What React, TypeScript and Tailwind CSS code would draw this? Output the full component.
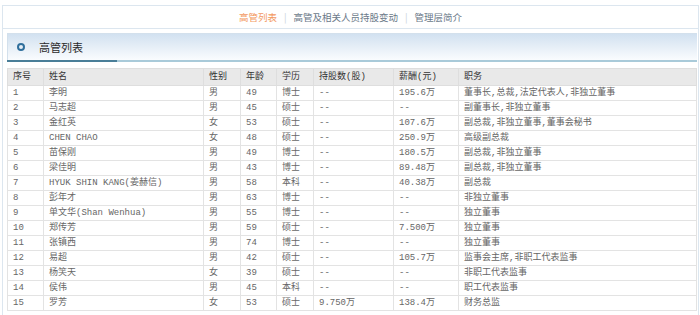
import React from 'react'

const rows = [
  ['1', '李明', '男', '49', '博士', '--', '195.6万', '董事长,总裁,法定代表人,非独立董事'],
  ['2', '马志超', '男', '45', '硕士', '--', '--', '副董事长,非独立董事'],
  ['3', '金红英', '女', '53', '硕士', '--', '107.6万', '副总裁,非独立董事,董事会秘书'],
  ['4', 'CHEN CHAO', '女', '48', '硕士', '--', '250.9万', '高级副总裁'],
  ['5', '苗保刚', '男', '49', '博士', '--', '180.5万', '副总裁,非独立董事'],
  ['6', '梁佳明', '男', '43', '博士', '--', '89.48万', '副总裁,非独立董事'],
  ['7', 'HYUK SHIN KANG(姜赫信)', '男', '58', '本科', '--', '40.38万', '副总裁'],
  ['8', '彭年才', '男', '63', '博士', '--', '--', '非独立董事'],
  ['9', '单文华(Shan Wenhua)', '男', '55', '博士', '--', '--', '独立董事'],
  ['10', '郑传芳', '男', '59', '硕士', '--', '7.500万', '独立董事'],
  ['11', '张镇西', '男', '74', '博士', '--', '--', '独立董事'],
  ['12', '易超', '男', '42', '硕士', '--', '105.7万', '监事会主席,非职工代表监事'],
  ['13', '杨笑天', '女', '39', '硕士', '--', '--', '非职工代表监事'],
  ['14', '侯伟', '男', '45', '本科', '--', '--', '职工代表监事'],
  ['15', '罗芳', '女', '53', '硕士', '9.750万', '138.4万', '财务总监'],
]

const heads = ['序号', '姓名', '性别', '年龄', '学历', '持股数(股)', '薪酬(元)', '职务']
const widths = ['w-[36px]', 'w-[160px]', 'w-[37px]', 'w-[36px]', 'w-[37px]', 'w-[80px]', 'w-[65px]', '']

export default function App() {
  return (
    <main className="w-[700px] h-[315px] overflow-hidden bg-white pt-[5px] pl-[2px] font-['Liberation_Mono','Noto_Sans_CJK_SC',monospace]">
      <div className="w-[697px] h-[320px] border border-[#dce6ef] pl-[4px]">
        {/* Tabs */}
        <div className="-ml-[4px] h-[23px] border-b border-[#dce6ef] flex items-center justify-center gap-[7px] text-[9.5px] font-['Noto_Sans_CJK_SC',sans-serif]">
          <span className="text-[#f39a62]">高管列表</span>
          <span className="text-[#c8d0d8]">|</span>
          <span className="text-[#6b7989]">高管及相关人员持股变动</span>
          <span className="text-[#c8d0d8]">|</span>
          <span className="text-[#6b7989]">管理层简介</span>
        </div>

        {/* Section header */}
        <div className="mt-[4px] w-[690px]">
          <div className="h-[27px] flex items-center border-t border-l border-[#d3e0ec] bg-gradient-to-b from-[#d2e1f0] to-[#fafcfe]">
            <span className="ml-[9px] w-[8px] h-[8px] rounded-full border-2 border-[#2f6f9c]" />
            <span className="ml-[14px] text-[11px] text-[#2a2a2a] font-['Noto_Sans_CJK_SC',sans-serif]">高管列表</span>
          </div>
          <div className="flex h-[2px]">
            <div className="w-[110px] bg-[#4a7e98]" />
            <div className="flex-1 bg-[#a9cad9]" />
          </div>
        </div>

        {/* Table */}
        <table className="mt-[6px] w-[690px] border-collapse text-[9px] leading-none">
          <thead>
            <tr className="h-[17px] bg-[#e9e9e9] text-[#333]">
              {heads.map((h, i) => (
                <th key={i} className={`${widths[i]} border border-[#dedede] px-[5px] text-left font-normal`}>{h}</th>
              ))}
            </tr>
          </thead>
          <tbody>
            {rows.map((r, i) => (
              <tr key={i} className="h-[15px] text-[#666]">
                {r.map((c, j) => (
                  <td key={j} className="border border-[#e3e3e3] px-[5px] whitespace-nowrap">{c}</td>
                ))}
              </tr>
            ))}
          </tbody>
        </table>
      </div>
    </main>
  )
}
